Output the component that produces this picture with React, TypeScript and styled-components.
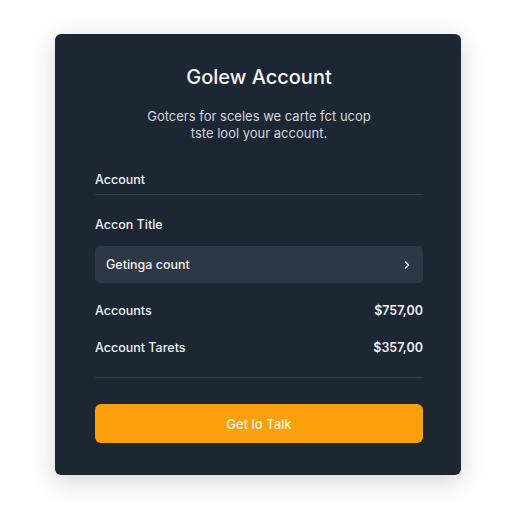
import styled, { createGlobalStyle } from "styled-components";

const GlobalStyle = createGlobalStyle`
    body {
        margin: 0;
        background: #ffffff;
        font-family: Inter, "Noto Sans", sans-serif;
    }
`;

const Page = styled.div`
    padding: 34px 0 0 55px;
    height: 512px;
    box-sizing: border-box;
`;

const Card = styled.div`
    width: 406px;
    height: 441px;
    box-sizing: border-box;
    padding: 30px 38px 0 40px;
    background: #1d2633;
    border-radius: 6px;
    box-shadow: 0 6px 24px rgba(0, 0, 0, 0.18);
    color: #f3f4f6;
    display: flex;
    flex-direction: column;
`;

const Title = styled.h1`
    margin: 0;
    font-size: 20px;
    font-weight: 500;
    text-align: center;
    color: #f5f6f8;
    line-height: 26px;
`;

const Subtitle = styled.p`
    margin: 18px 0 0;
    font-size: 13px;
    line-height: 17px;
    text-align: center;
    color: #d2d6dc;
`;

const Label = styled.div<{ $top: number }>`
    margin-top: ${(p) => p.$top}px;
    font-size: 12.5px;
    font-weight: 500;
    color: #eef0f3;
    line-height: 16px;
`;

const Divider = styled.hr<{ $top: number }>`
    margin: ${(p) => p.$top}px 0 0;
    border: none;
    border-top: 1px solid #323c4a;
`;

const Select = styled.div`
    margin-top: 13px;
    height: 37px;
    padding: 0 12px 0 11px;
    background: #2e3745;
    border-radius: 5px;
    display: flex;
    align-items: center;
    justify-content: space-between;
    font-size: 12.5px;
    font-weight: 500;
    color: #eef0f3;
`;

const Row = styled.div<{ $top: number }>`
    margin-top: ${(p) => p.$top}px;
    display: flex;
    justify-content: space-between;
    align-items: center;
    font-size: 12.5px;
    font-weight: 500;
    line-height: 16px;
    color: #eef0f3;
`;

const Amount = styled.span`
    font-weight: 600;
`;

const Button = styled.button`
    margin-top: 26px;
    height: 39px;
    border: none;
    border-radius: 6px;
    background: #fb9f0a;
    color: #fff4e0;
    font-family: inherit;
    font-size: 13px;
    font-weight: 500;
    cursor: pointer;
`;

function Chevron() {
    return (
        <svg width="8" height="10" viewBox="0 0 8 10" fill="none">
            <path d="M2.5 2 L5.5 5 L2.5 8" stroke="#e5e7eb" strokeWidth="1.4" strokeLinecap="round" strokeLinejoin="round" />
        </svg>
    );
}

export default function App() {
    return (
        <Page>
            <GlobalStyle />
            <Card>
                <Title>Golew Account</Title>
                <Subtitle>
                    Gotcers for sceles we carte fct ucop
                    <br />
                    tste lool your account.
                </Subtitle>
                <Label $top={30}>Account</Label>
                <Divider $top={6} />
                <Label $top={22}>Accon Title</Label>
                <Select>
                    <span>Getinga count</span>
                    <Chevron />
                </Select>
                <Row $top={20}>
                    <span>Accounts</span>
                    <Amount>$757,00</Amount>
                </Row>
                <Row $top={21}>
                    <span>Account Tarets</span>
                    <Amount>$357,00</Amount>
                </Row>
                <Divider $top={21} />
                <Button>Get lo Talk</Button>
            </Card>
        </Page>
    );
}
